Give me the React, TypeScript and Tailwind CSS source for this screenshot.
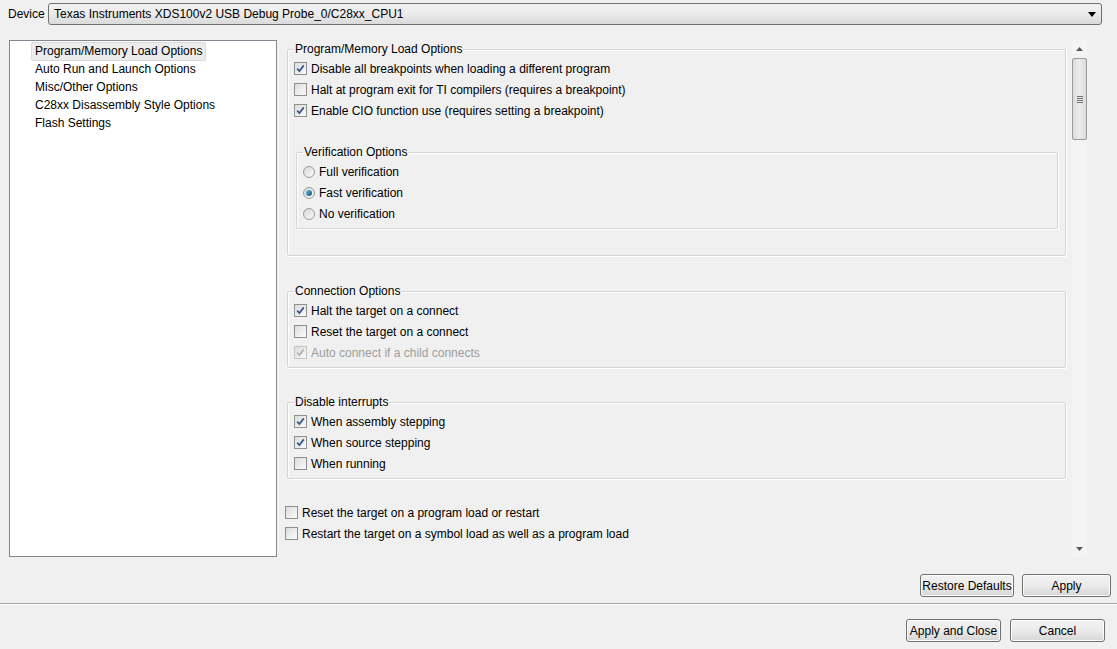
import React from "react";

const font = { fontFamily: '"Liberation Sans", Arial, sans-serif' };

const Check = ({ checked = false, disabled = false }: { checked?: boolean; disabled?: boolean }) => (
  <span
    className={
      "flex h-[13px] w-[13px] shrink-0 items-center justify-center border bg-gradient-to-br from-[#dcdcdc] to-[#fbfbfb] " +
      (disabled ? "border-[#c4c4c4]" : "border-[#8e8f8f]")
    }
  >
    {checked && (
      <svg width="9" height="9" viewBox="0 0 9 9">
        <path
          d="M1.2 4.6 L3.4 7 L7.8 1.4"
          fill="none"
          stroke={disabled ? "#b4b4b4" : "#3c5b8e"}
          strokeWidth="1.8"
        />
      </svg>
    )}
  </span>
);

const Radio = ({ checked = false }: { checked?: boolean }) => (
  <span className="flex h-[12px] w-[12px] shrink-0 items-center justify-center rounded-full border border-[#9a9a9a] bg-gradient-to-br from-[#d8d8d8] to-[#fafafa]">
    {checked && <span className="h-[6px] w-[6px] rounded-full bg-gradient-to-br from-[#6fb7e6] to-[#0d4f7e]" />}
  </span>
);

const CheckRow = ({ label, checked, disabled }: { label: string; checked?: boolean; disabled?: boolean }) => (
  <div className="flex h-[21px] items-center gap-[4px]">
    <Check checked={checked} disabled={disabled} />
    <span className={disabled ? "text-[#9d9d9d]" : "text-black"}>{label}</span>
  </div>
);

const RadioRow = ({ label, checked }: { label: string; checked?: boolean }) => (
  <div className="flex h-[21px] items-center gap-[4px]">
    <Radio checked={checked} />
    <span>{label}</span>
  </div>
);

const Group = ({ title, className, children }: { title: string; className?: string; children: React.ReactNode }) => (
  <fieldset className={"rounded-[2px] border border-[#d5d5d5] shadow-[inset_1px_1px_0_#ffffff,1px_1px_0_#ffffff] " + (className ?? "")}>
    <legend className="h-[16px] px-[1px] leading-[16px]">{title}</legend>
    {children}
  </fieldset>
);

const Button = ({ children, className }: { children: React.ReactNode; className?: string }) => (
  <button
    className={
      "h-[23px] rounded-[3px] border border-[#707070] bg-gradient-to-b from-[#f2f2f2] via-[#ebebeb] to-[#d6d6d6] text-black shadow-[inset_0_0_0_1px_#fcfcfc] " +
      (className ?? "")
    }
  >
    {children}
  </button>
);

const treeItems = [
  "Program/Memory Load Options",
  "Auto Run and Launch Options",
  "Misc/Other Options",
  "C28xx Disassembly Style Options",
  "Flash Settings",
];

export default function App() {
  return (
    <div className="flex h-[649px] w-[1117px] flex-col overflow-hidden bg-[#f0f0f0] text-[12px] text-black" style={font}>
      {/* device row */}
      <div className="flex h-[28px] items-center pl-[8px] pr-[15px]">
        <span className="w-[40px]">Device</span>
        <div className="relative flex h-[22px] flex-1 items-center rounded-[3px] border border-[#707070] bg-gradient-to-b from-[#f2f2f2] via-[#ebebeb] to-[#dadada] pl-[5px]">
          <span>Texas Instruments XDS100v2 USB Debug Probe_0/C28xx_CPU1</span>
          <svg className="absolute right-[5px] top-[8px]" width="8" height="5" viewBox="0 0 8 5">
            <path d="M0 0 H8 L4 5 Z" fill="#000" />
          </svg>
        </div>
      </div>

      {/* main */}
      <div className="mt-[12px] flex h-[517px]">
        <div className="ml-[9px] w-[268px] border border-[#828790] bg-white pt-[1px]">
          {treeItems.map((t, i) => (
            <div key={t} className="flex h-[18px] items-center">
              <span
                className={
                  "ml-[21px] px-[3px] leading-[17px] " +
                  (i === 0 ? "rounded-[2px] border border-[#dadada] bg-[#ececec]" : "border border-transparent")
                }
              >
                {t}
              </span>
            </div>
          ))}
        </div>

        <div className="ml-[6px] flex-1 overflow-hidden pl-[2px]">
          <Group title="Program/Memory Load Options" className="ml-[2px] mr-[4px] mt-[1px] pb-[26px] pl-[6px] pr-[7px]">
            <div className="pt-[1px]">
              <CheckRow label="Disable all breakpoints when loading a different program" checked />
              <CheckRow label="Halt at program exit for TI compilers (requires a breakpoint)" />
              <CheckRow label="Enable CIO function use (requires setting a breakpoint)" checked />
            </div>
            <Group title="Verification Options" className="ml-[2px] mt-[23px] pb-[4px] pl-[6px]">
              <div className="pt-[1px]">
                <RadioRow label="Full verification" />
                <RadioRow label="Fast verification" checked />
                <RadioRow label="No verification" />
              </div>
            </Group>
          </Group>

          <Group title="Connection Options" className="ml-[2px] mr-[4px] mt-[27px] pb-[4px] pl-[6px]">
            <div className="pt-[1px]">
              <CheckRow label="Halt the target on a connect" checked />
              <CheckRow label="Reset the target on a connect" />
              <CheckRow label="Auto connect if a child connects" checked disabled />
            </div>
          </Group>

          <Group title="Disable interrupts" className="ml-[2px] mr-[4px] mt-[26px] pb-[4px] pl-[6px]">
            <div className="pt-[1px]">
              <CheckRow label="When assembly stepping" checked />
              <CheckRow label="When source stepping" checked />
              <CheckRow label="When running" />
            </div>
          </Group>

          <div className="mt-[23px]">
            <CheckRow label="Reset the target on a program load or restart" />
            <CheckRow label="Restart the target on a symbol load as well as a program load" />
          </div>
        </div>

        {/* scrollbar */}
        <div className="ml-[2px] mr-[30px] flex w-[15px] flex-col items-center bg-[#f4f4f4]">
          <svg className="mt-[7px]" width="7" height="4" viewBox="0 0 7 4">
            <path d="M0 4 L3.5 0 L7 4 Z" fill="#5a5a5a" />
          </svg>
          <div className="mt-[7px] flex h-[82px] w-[15px] items-center justify-center rounded-[2px] border border-[#9a9a9a] bg-gradient-to-r from-[#dadada] via-[#ededed] to-[#dadada]">
            <div className="flex flex-col gap-[1px]">
              <span className="h-[1px] w-[6px] bg-[#707070]" />
              <span className="h-[1px] w-[6px] bg-[#707070]" />
              <span className="h-[1px] w-[6px] bg-[#707070]" />
              <span className="h-[1px] w-[6px] bg-[#707070]" />
            </div>
          </div>
          <div className="flex-1" />
          <svg className="mb-[6px]" width="7" height="4" viewBox="0 0 7 4">
            <path d="M0 0 L7 0 L3.5 4 Z" fill="#5a5a5a" />
          </svg>
        </div>
      </div>

      {/* restore/apply */}
      <div className="mt-[17px] flex justify-end gap-[8px] pr-[6px]">
        <Button className="w-[94px]">Restore Defaults</Button>
        <Button className="w-[89px]">Apply</Button>
      </div>

      <div className="mt-[6px] h-[1px] bg-[#a0a0a0]" />
      <div className="h-[1px] bg-white" />

      <div className="mt-[14px] flex justify-end gap-[9px] pr-[12px]">
        <Button className="w-[95px] border-[#3c7fb1] from-[#eaf6fd] via-[#d9f0fc] to-[#a7d9f5] shadow-[inset_0_0_0_1px_#48d6f4]">
          Apply and Close
        </Button>
        <Button className="w-[95px]">Cancel</Button>
      </div>
    </div>
  );
}
